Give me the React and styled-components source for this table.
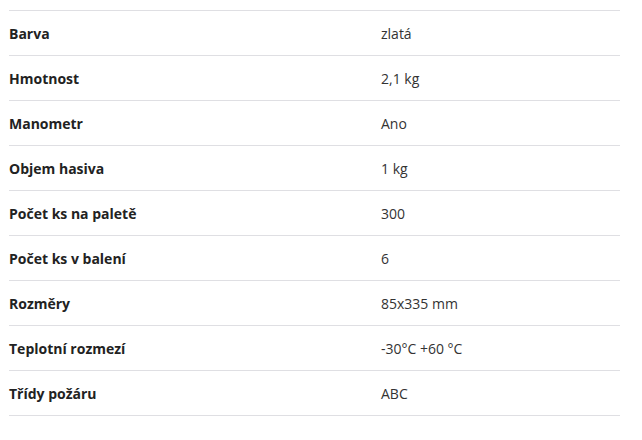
import React from "react";
import styled, { createGlobalStyle } from "styled-components";

const rows = [
	["Barva", "zlatá"],
	["Hmotnost", "2,1 kg"],
	["Manometr", "Ano"],
	["Objem hasiva", "1 kg"],
	["Počet ks na paletě", "300"],
	["Počet ks v balení", "6"],
	["Rozměry", "85x335 mm"],
	["Teplotní rozmezí", "-30°C +60 °C"],
	["Třídy požáru", "ABC"],
];

const GlobalStyle = createGlobalStyle`
	body {
		margin: 0;
		background: #fff;
		font-family: "Open Sans", "Noto Sans", sans-serif;
	}
`;

const Wrapper = styled.div`
	padding: 10px 22px 0 9px;
`;

const Table = styled.div`
	width: 611px;
	border-top: 1px solid #dfdfe3;
`;

const Row = styled.div`
	display: grid;
	grid-template-columns: 372px 1fr;
	align-items: center;
	height: 44px;
	border-bottom: 1px solid #dfdfe3;
	font-size: 14px;
`;

const Label = styled.div`
	font-weight: 700;
	color: #222;
`;

const Value = styled.div`
	color: #333;
`;

export default function App() {
	return (
		<Wrapper>
			<GlobalStyle />
			<Table>
				{rows.map(([label, value]) => (
					<Row key={label}>
						<Label>{label}</Label>
						<Value>{value}</Value>
					</Row>
				))}
			</Table>
		</Wrapper>
	);
}
